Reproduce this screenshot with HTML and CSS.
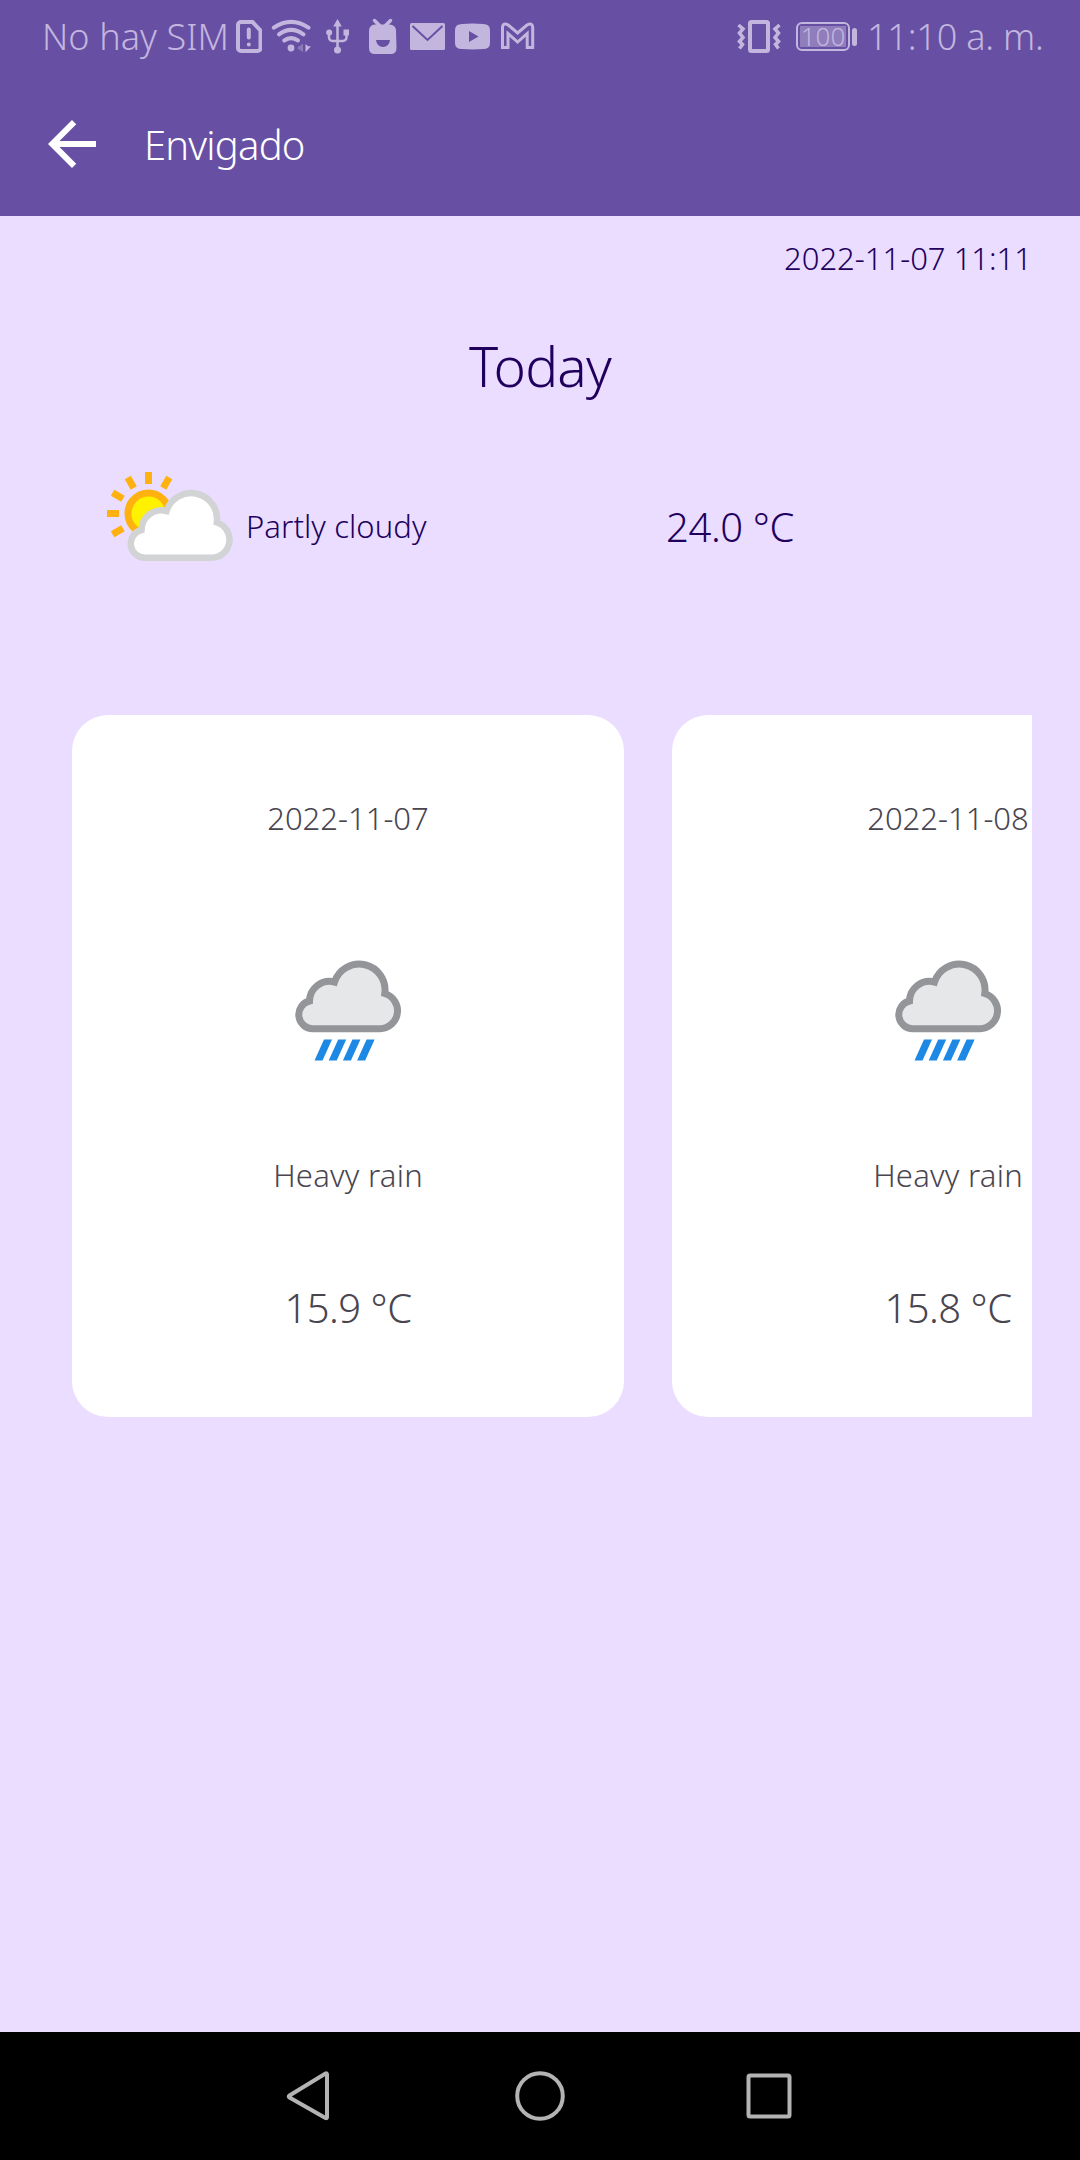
FILE: index.html
```html
<!DOCTYPE html>
<html lang="en">
<head>
<meta charset="utf-8">
<title>Envigado</title>
<link rel="stylesheet" href="styles.css">
</head>
<body>
<div class="screen">
  <header class="top">
    <div class="status">
      <div class="status-left">
        <span class="carrier">No hay SIM</span>
        <svg class="ic-sim" viewBox="236 19 26 33"><path class="line4" d="M238 24a3 3 0 0 1 3-3h11.500l8 8.500V47a3 3 0 0 1-3 3H241a3 3 0 0 1-3-3z"/><path class="line4" stroke-linecap="round" d="M248.800 28.500v8M248.800 43.400v.2"/></svg>
        <svg class="ic-wifi" viewBox="271 19 41 34"><g class="line4" stroke-linecap="round"><path d="M273.800 27.700Q291 16 308.500 27.700"/><path d="M279 34.300Q291 25.500 303.500 34.300"/><path d="M284.300 40.500Q291 35.800 298 40.500"/></g><circle class="solid" cx="291" cy="48" r="3.400"/><path class="solid dim" d="M297 48l6-4.500V52z"/><path class="solid" d="M305.500 44v8.300l5.500-6h-3z"/></svg>
        <svg class="ic-usb" viewBox="326 19 24 35"><path class="line2" d="M337.500 25v24M329 35v2.500a3.500 3.500 0 0 0 3.500 3.500h10.500a3.500 3.500 0 0 0 3.500-3.500V33"/><path class="solid" d="M337.500 19l4.300 7.500h-8.600zM343.500 29.500h5.500v6h-5.500z"/><circle class="solid" cx="329.200" cy="32.500" r="3"/><circle class="solid" cx="337.500" cy="50" r="3.500"/></svg>
        <svg class="ic-bot" viewBox="368 18 30 37"><path class="line3" stroke-linecap="round" d="M374.500 20.500l6 6M390.500 20.500l-6 6"/><path class="solid" fill-rule="evenodd" d="M375 24.500h15q6 1 6 6l.5 17.500q0 6-6 6H375q-6 0-6-6V31q0-6 6-6.500zM376 40h14q-1 7-7 7t-7-7z"/></svg>
        <svg class="ic-mail" viewBox="410 23 35 27"><rect class="solid" x="410" y="23" width="35" height="27" rx="1.500"/><path class="cut" d="M412.500 26l15 14 15-14"/></svg>
        <svg class="ic-yt" viewBox="455 23 35 27"><path class="solid" fill-rule="evenodd" d="M462 24q10.500-.8 21 0 7 0 7 6v13q0 6-7 6-10.500.8-21 0-7 0-7-6V30q0-6 7-6zM469 31v11l9.500-5.500z"/></svg>
        <svg class="ic-gm" viewBox="500 22 35 28"><path class="line-m" d="M502.500 27.500q0-4 3.800-3.300l2 .8 9.300 8 9.300-8 2-.8q3.800-.7 3.800 3.300V47.500h-5.500V33.500l-9.600 8.500-9.600-8.500v14h-5.500z"/></svg>
      </div>
      <div class="status-right">
        <svg class="ic-vib" viewBox="737 19 44 34"><rect class="line4" x="750" y="22" width="18" height="29" rx="1.500"/><path class="line3" d="M738.500 25l4.500 4-3.500 4 3.500 4.500-3.500 4 3 3-3 4M779.500 25l-4.500 4 3.500 4-3.500 4.500 3.500 4-3 3 3 4"/></svg>
        <div class="battery"><span class="battery-level">100</span></div>
        <span class="clock">11:10 a. m.</span>
      </div>
    </div>
    <div class="toolbar">
      <svg class="ic-back" viewBox="4 4 16 16"><path fill="#fff" d="M20 11H7.830l5.590-5.590L12 4l-8 8 8 8 1.410-1.410L7.830 13H20z"/></svg>
      <h1 class="title">Envigado</h1>
    </div>
  </header>
  <main class="content">
    <p class="updated">2022-11-07 11:11</p>
    <h2 class="today">Today</h2>
    <section class="now">
      <svg class="ic-partly" viewBox="107 471 127 91">
        <circle cx="148.500" cy="513.500" r="20.500" fill="#fff200" stroke="#ffb10f" stroke-width="7"/>
        <g fill="#ffb10f"><rect id="ray" x="145" y="472" width="7" height="12"/><use href="#ray" transform="rotate(30 148.500 513.500)"/><use href="#ray" transform="rotate(-30 148.500 513.500)"/><use href="#ray" transform="rotate(-60 148.500 513.500)"/><use href="#ray" transform="rotate(-90 148.500 513.500)"/><use href="#ray" transform="rotate(-120 148.500 513.500)"/></g>
        <path fill="#fff" stroke="#d1d3d4" stroke-width="6.500" d="M145 557.700A14.050 14.050 0 0 1 141.500 530A20 20 0 0 1 166.500 511A25.900 25.900 0 0 1 216.800 522.500A18 18 0 0 1 212 557.700z"/>
      </svg>
      <span class="now-text">Partly cloudy</span>
      <span class="now-temp">24.0 °C</span>
    </section>
    <section class="forecast">
      <article class="card">
        <p class="date">2022-11-07</p>
        <svg class="ic-rain" viewBox="126 489 108 102"><path class="rain-cloud" d="M145 557.700A14.050 14.050 0 0 1 141.500 530A20 20 0 0 1 166.500 511A25.900 25.900 0 0 1 216.800 522.500A18 18 0 0 1 212 557.700z"/><path fill="#1e88e5" d="M156 568.500h8l-9.500 21h-8zM170.200 568.500h8l-9.500 21h-8zM184.400 568.500h8l-9.500 21h-8zM198.600 568.500h8l-9.500 21h-8z"/></svg>
        <p class="condition">Heavy rain</p>
        <p class="temp">15.9 °C</p>
      </article>
      <article class="card">
        <p class="date">2022-11-08</p>
        <svg class="ic-rain" viewBox="126 489 108 102"><path class="rain-cloud" d="M145 557.700A14.050 14.050 0 0 1 141.500 530A20 20 0 0 1 166.500 511A25.900 25.900 0 0 1 216.800 522.500A18 18 0 0 1 212 557.700z"/><path fill="#1e88e5" d="M156 568.500h8l-9.500 21h-8zM170.200 568.500h8l-9.500 21h-8zM184.400 568.500h8l-9.500 21h-8zM198.600 568.500h8l-9.500 21h-8z"/></svg>
        <p class="condition">Heavy rain</p>
        <p class="temp">15.8 °C</p>
      </article>
    </section>
  </main>
  <nav class="navbar">
    <svg class="ic-nav" viewBox="287 2071 50 50"><path class="nav-line" d="M326.500 2073.500q1.500-.8 1.500 1V2117q0 1.800-1.500 1L290.500 2097.500q-1.500-1 0-2z"/></svg>
    <svg class="ic-nav" viewBox="515 2071 50 50"><circle class="nav-line" cx="540" cy="2096" r="22.800"/></svg>
    <svg class="ic-nav" viewBox="744 2071 50 50"><rect class="nav-line" x="748.500" y="2075.500" width="41" height="41" rx="1.500"/></svg>
  </nav>
</div>
</body>
</html>
```
FILE: styles.css
```css
* { box-sizing: border-box; margin: 0; padding: 0; }
body { font-family: "Noto Sans", "Open Sans", sans-serif; font-weight: 300; }
svg { display: block; flex: none; }
.screen { width: 1080px; height: 2160px; display: flex; flex-direction: column; background: #eaddff; overflow: hidden; }

/* status bar and toolbar */
.top { height: 216px; background: #6750a4; }
.status { height: 72px; display: flex; justify-content: space-between; color: #c3b6de; font-size: 36px; line-height: 72px; white-space: nowrap; }
.status-left, .status-right { display: flex; align-items: center; }
.status-left { padding-left: 42px; }
.status-right { padding-right: 36px; }
.line4, .line3, .line2, .line-m { fill: none; stroke: #c3b6de; stroke-width: 4px; }
.line3 { stroke-width: 3.5px; }
.line2 { stroke-width: 2.5px; }
.line-m { stroke-width: 3px; }
.solid { fill: #c3b6de; }
.dim { opacity: .4; }
.cut { fill: none; stroke: #6750a4; stroke-width: 2px; }
.carrier { width: 194px; padding-top: 1px; letter-spacing: .1px; }
.ic-sim { width: 26px; height: 33px; }
.ic-wifi { width: 41px; height: 34px; margin-left: 9px; }
.ic-usb { width: 24px; height: 35px; margin-left: 14px; }
.ic-bot { width: 30px; height: 37px; margin-left: 18px; }
.ic-mail { width: 35px; height: 27px; margin-left: 12px; }
.ic-yt { width: 35px; height: 27px; margin-left: 10px; }
.ic-gm { width: 35px; height: 28px; margin-left: 10px; }
.ic-vib { width: 44px; height: 34px; }
.battery { position: relative; width: 54px; height: 29px; margin-left: 15px; border: 2px solid #c3b6de; border-radius: 6px; padding: 2px; }
.battery::after { content: ""; position: absolute; left: 54px; top: 4px; width: 5px; height: 18px; border-radius: 3px; background: #c3b6de; }
.battery-level { display: block; height: 21px; background: #8f7dbc; font-size: 26px; line-height: 21px; text-align: center; }
.clock { width: 177px; margin-left: 17px; padding-top: 2px; letter-spacing: -.2px; }
.toolbar { height: 144px; display: flex; align-items: center; padding-left: 48px; }
.ic-back { width: 48px; height: 48px; }
.title { margin-left: 48px; padding-top: 2px; font-size: 40px; line-height: 56px; font-weight: 300; color: #fff; letter-spacing: -.8px; }

/* current weather */
.content { flex: 1; display: flex; flex-direction: column; color: #21005d; }
.updated { height: 86px; padding: 18px 48px 0 0; font-size: 31px; line-height: 48px; text-align: right; }
.today { height: 130px; text-align: center; font-size: 55px; line-height: 128px; font-weight: 300; letter-spacing: -.8px; }
.now { height: 283px; display: flex; align-items: flex-start; padding: 39px 0 0 107px; }
.ic-partly { width: 127px; height: 91px; }
.now-text { width: 420px; margin: 30px 0 0 12px; font-size: 31px; line-height: 50px; letter-spacing: .1px; }
.now-temp { margin-top: 31px; font-size: 40px; line-height: 50px; letter-spacing: -.4px; }

/* daily forecast */
.forecast { display: flex; gap: 48px; margin: 0 48px 0 72px; overflow: hidden; color: #49454f; }
.card { flex: none; width: 552px; height: 702px; border-radius: 36px; background: #fff; display: flex; flex-direction: column; align-items: center; padding-top: 79px; }
.date, .condition { font-size: 31px; line-height: 48px; }
.ic-rain { width: 108px; height: 102px; margin-top: 118px; }
.rain-cloud { fill: #e6e7e8; stroke: #939598; stroke-width: 7px; }
.condition { margin-top: 89px; letter-spacing: .25px; }
.temp { margin-top: 79px; font-size: 40px; line-height: 60px; letter-spacing: -.5px; }

/* system navigation */
.navbar { height: 128px; background: #000; display: flex; justify-content: center; align-items: center; gap: 179px; }
.ic-nav { width: 50px; height: 50px; }
.nav-line { fill: none; stroke: #b3b3b3; stroke-width: 4px; }
```
